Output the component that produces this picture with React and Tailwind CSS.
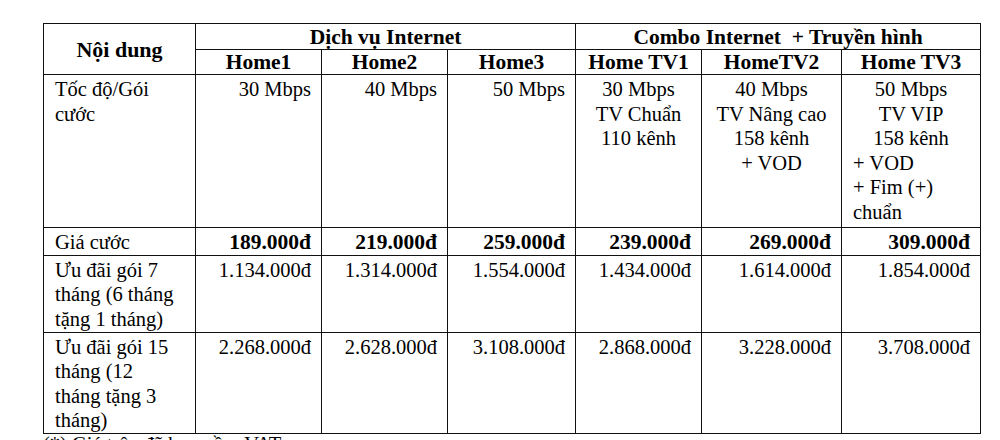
export default function App() {
  const b = "border-[1.5px] border-[#111]";
  const cell = `${b} align-top px-[11px] pt-[2px] leading-[24.5px]`;
  const R = ({ children, bold }) => (
    <td className={`${cell} text-right pr-[10px] ${bold ? "font-bold text-[21.5px]" : ""}`}>{children}</td>
  );
  return (
    <div className="w-[1000px] h-[440px] overflow-hidden bg-white text-[20.5px] text-black" style={{ fontFamily: '"Liberation Serif", "Times New Roman", serif' }}>
      <div className="pt-[23px] pl-[43px]">
        <table className="border-collapse table-fixed w-[937px]">
          <colgroup>
            <col className="w-[152px]" />
            <col className="w-[126px]" />
            <col className="w-[126px]" />
            <col className="w-[128px]" />
            <col className="w-[126px]" />
            <col className="w-[140px]" />
            <col className="w-[139px]" />
          </colgroup>
          <tbody>
            <tr className="h-[26px]">
              <td rowSpan={2} className={`${b} text-center font-bold align-middle text-[22px]`}>Nội dung</td>
              <td colSpan={3} className={`${b} text-center font-bold leading-[24px] text-[21.5px]`}>Dịch vụ Internet</td>
              <td colSpan={3} className={`${b} text-center font-bold leading-[24px] text-[21.5px]`}>Combo Internet&nbsp; + Truyền hình</td>
            </tr>
            <tr className="h-[25px]">
              {["Home1", "Home2", "Home3", "Home TV1", "HomeTV2", "Home TV3"].map((h) => (
                <td key={h} className={`${b} text-center font-bold leading-[23px] text-[21.5px]`}>{h}</td>
              ))}
            </tr>
            <tr className="h-[153px]">
              <td className={cell}>Tốc độ/Gói<br />cước</td>
              <R>30 Mbps</R>
              <R>40 Mbps</R>
              <R>50 Mbps</R>
              <td className={`${cell} text-center`}>30 Mbps<br />TV Chuẩn<br />110 kênh</td>
              <td className={`${cell} text-center`}>40 Mbps<br />TV Nâng cao<br />158 kênh<br />+ VOD</td>
              <td className={cell}>
                <div className="text-center">50 Mbps</div>
                <div className="text-center">TV VIP</div>
                <div className="text-center">158 kênh</div>
                <div>+ VOD</div>
                <div>+ Fim (+)</div>
                <div>chuẩn</div>
              </td>
            </tr>
            <tr className="h-[25px]">
              <td className={cell}>Giá cước</td>
              <R bold>189.000đ</R>
              <R bold>219.000đ</R>
              <R bold>259.000đ</R>
              <R bold>239.000đ</R>
              <R bold>269.000đ</R>
              <R bold>309.000đ</R>
            </tr>
            <tr className="h-[77px]">
              <td className={cell}>Ưu đãi gói 7<br />tháng (6 tháng<br />tặng 1 tháng)</td>
              <R>1.134.000đ</R>
              <R>1.314.000đ</R>
              <R>1.554.000đ</R>
              <R>1.434.000đ</R>
              <R>1.614.000đ</R>
              <R>1.854.000đ</R>
            </tr>
            <tr className="h-[101px]">
              <td className={cell}>Ưu đãi gói 15<br />tháng (12<br />tháng tặng 3<br />tháng)</td>
              <R>2.268.000đ</R>
              <R>2.628.000đ</R>
              <R>3.108.000đ</R>
              <R>2.868.000đ</R>
              <R>3.228.000đ</R>
              <R>3.708.000đ</R>
            </tr>
          </tbody>
        </table>
        <div className="leading-[24.5px] -mt-[2px]">(*) Giá trên đã bao gồm VAT</div>
      </div>
    </div>
  );
}
